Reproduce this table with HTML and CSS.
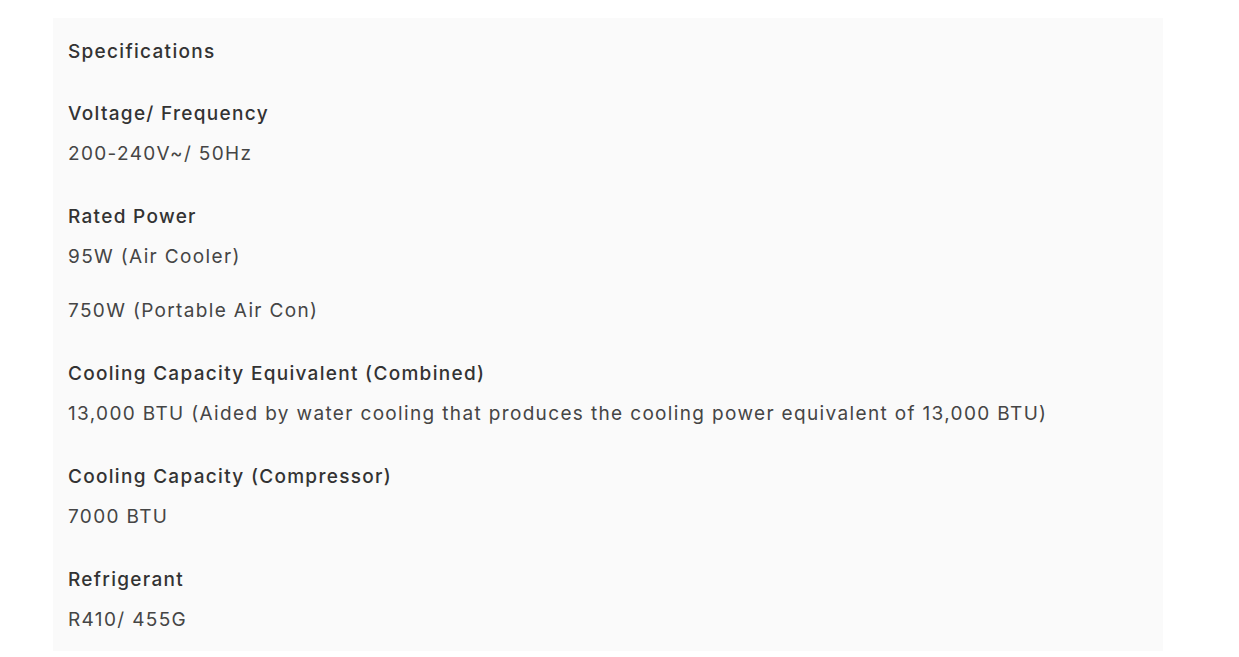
FILE: index.html
```html
<!DOCTYPE html>
<html>
<head>
<meta charset="utf-8">
<link rel="stylesheet" href="styles.css">
</head>
<body>
<section class="specs">
  <h2 class="specs-title">Specifications</h2>
  <div class="spec">
    <h3 class="spec-label">Voltage/ Frequency</h3>
    <p class="spec-value">200-240V~/ 50Hz</p>
  </div>
  <div class="spec">
    <h3 class="spec-label">Rated Power</h3>
    <p class="spec-value">95W (Air Cooler)</p>
    <p class="spec-value">750W (Portable Air Con)</p>
  </div>
  <div class="spec">
    <h3 class="spec-label">Cooling Capacity Equivalent (Combined)</h3>
    <p class="spec-value">13,000 BTU (Aided by water cooling that produces the cooling power equivalent of 13,000 BTU)</p>
  </div>
  <div class="spec">
    <h3 class="spec-label">Cooling Capacity (Compressor)</h3>
    <p class="spec-value">7000 BTU</p>
  </div>
  <div class="spec">
    <h3 class="spec-label">Refrigerant</h3>
    <p class="spec-value">R410/ 455G</p>
  </div>
</section>
</body>
</html>
```
FILE: styles.css
```css
* { box-sizing: border-box; }
html, body { margin: 0; padding: 0; background: #ffffff; }
body {
  font-family: Inter, "Liberation Sans", sans-serif;
  padding: 18px 76px 0 53px;
}
.specs {
  background: #fafafa;
  width: 1110px;
  padding: 40px 15px 19px;
  display: flex;
  flex-direction: column;
  gap: 39px;
}
.specs-title, .spec-label, .spec-value {
  margin: 0;
  font-size: 19px;
  line-height: 24px;
  letter-spacing: 1.3px;
  white-space: nowrap;
}
.specs-title, .spec-label {
  font-weight: 500;
  color: #333333;
}
.specs-title { margin-top: -18px; margin-bottom: -1px; }
.spec { display: flex; flex-direction: column; }
.spec-label { margin-bottom: 16px; }
.spec-value { font-weight: 400; color: #454545; letter-spacing: 1.35px; }
.spec-value + .spec-value { margin-top: 30px; }
```
